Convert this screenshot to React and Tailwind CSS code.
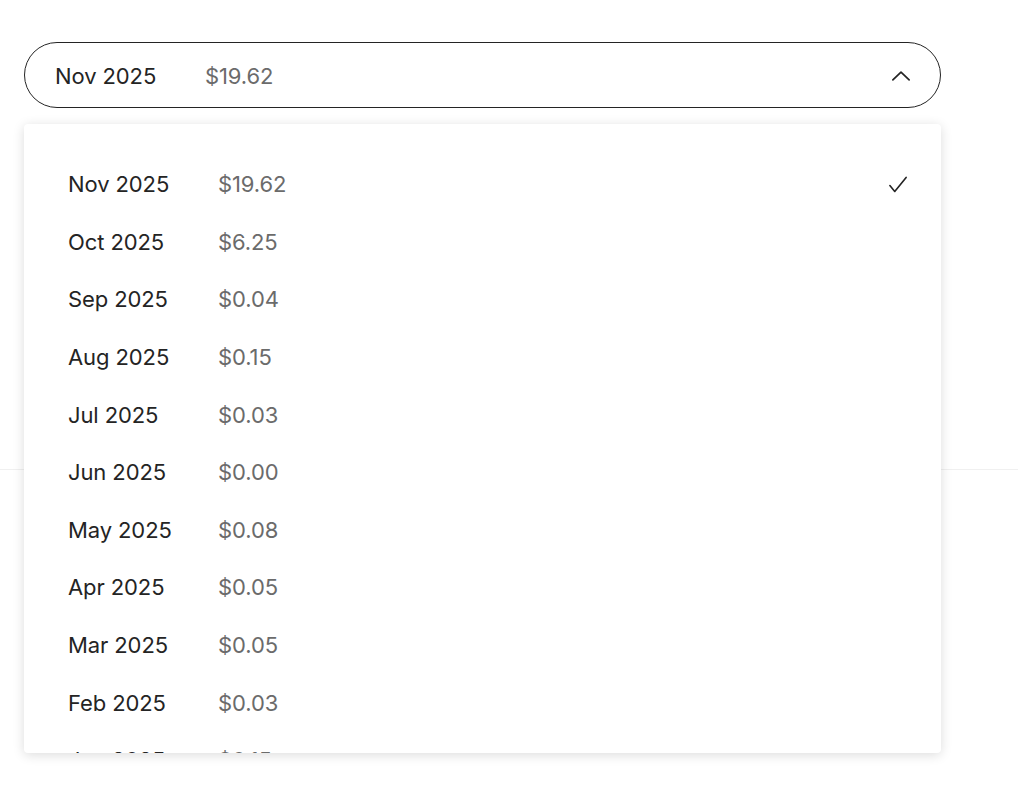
import React from "react";

const items = [
  ["Nov 2025", "$19.62"],
  ["Oct 2025", "$6.25"],
  ["Sep 2025", "$0.04"],
  ["Aug 2025", "$0.15"],
  ["Jul 2025", "$0.03"],
  ["Jun 2025", "$0.00"],
  ["May 2025", "$0.08"],
  ["Apr 2025", "$0.05"],
  ["Mar 2025", "$0.05"],
  ["Feb 2025", "$0.03"],
  ["Jan 2025", "$0.15"],
];

export default function App() {
  return (
    <div
      className="relative w-[1018px] h-[800px] bg-white overflow-hidden text-[#242424]"
      style={{ fontFamily: "Inter, 'Liberation Sans', sans-serif" }}
    >
      <div className="pt-[42px] pl-[24px]">
        <div className="w-[917px] h-[66px] rounded-full border border-[#242424] flex items-center pl-[30px] pr-[26px] pt-[2px]">
          <span className="w-[150px] text-[22px] tracking-[-0.1px]">Nov 2025</span>
          <span className="text-[22px] text-[#6b6b6b] tracking-[-0.1px]">$19.62</span>
          <svg className="ml-auto" width="26" height="26" viewBox="0 0 24 24" fill="none" stroke="#242424" strokeWidth="1.6" strokeLinecap="round" strokeLinejoin="round">
            <path d="M4.5 15.5l7.5-7 7.5 7" />
          </svg>
        </div>
      </div>
      <div className="mt-[361px] border-t border-[#f0f0f0]" />

      <div className="absolute left-[24px] top-[124px] w-[917px] h-[629px] bg-white rounded-[4px] shadow-[0_2px_12px_rgba(0,0,0,0.14)] overflow-hidden">
        <div className="pt-[32px] pl-[44px] pr-[30px]">
          {items.map(([m, p], i) => (
            <div key={m} className="h-[57.6px] flex items-center">
              <span className="w-[150px] text-[22px] tracking-[-0.1px]">{m}</span>
              <span className="text-[22px] text-[#6b6b6b] tracking-[-0.1px]">{p}</span>
              {i === 0 && (
                <svg className="ml-auto" width="26" height="26" viewBox="0 0 24 24" fill="none" stroke="#242424" strokeWidth="1.5" strokeLinecap="round" strokeLinejoin="round">
                  <path d="M4.5 12.5l4.5 5.5L19.5 5" />
                </svg>
              )}
            </div>
          ))}
        </div>
      </div>
    </div>
  );
}
